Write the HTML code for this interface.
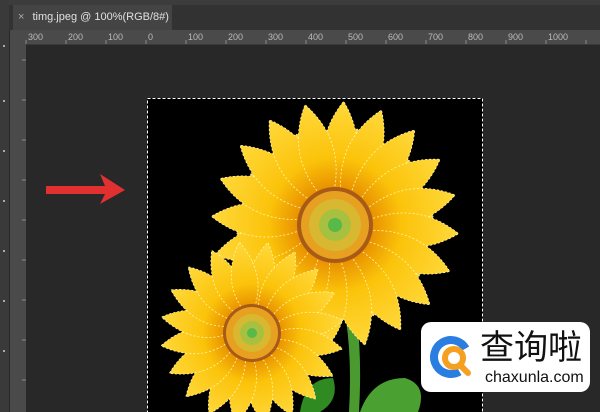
<!DOCTYPE html>
<html><head><meta charset="utf-8"><style>
body{margin:0;width:600px;height:412px;overflow:hidden;background:#282828;font-family:"Liberation Sans",sans-serif;position:relative}
.abs{position:absolute}
</style></head><body>
<div class="abs" style="left:0;top:0;width:600px;height:5px;background:#3c3c3c"></div>
<div class="abs" style="left:0;top:5px;width:600px;height:25px;background:#323232"></div>
<div class="abs" style="left:13px;top:5px;width:159px;height:25px;background:#444;color:#e0e0e0;font-size:11px;line-height:25px;white-space:nowrap;overflow:hidden">
<span style="margin-left:5px;color:#aaa">×</span><span style="margin-left:8px">timg.jpeg @ 100%(RGB/8#) <span style="color:#999">*</span></span></div>
<div class="abs" style="left:0;top:0;width:9px;height:412px;background:#3a3a3a"></div>
<div class="abs" style="left:10px;top:30px;width:590px;height:14px;background:#4a4a4a;border-bottom:1px solid #3a3a3a"></div>
<div class="abs" style="left:10px;top:30px;width:16px;height:382px;background:#4a4a4a"></div>
<div class="abs" style="top:30px;left:0;width:600px;height:14px;font-size:9px;color:#bbb;line-height:14px">
<span class="abs" style="left:28px">300</span><span class="abs" style="left:68px">200</span><span class="abs" style="left:108px">100</span><span class="abs" style="left:148px">0</span><span class="abs" style="left:188px">100</span><span class="abs" style="left:228px">200</span><span class="abs" style="left:268px">300</span><span class="abs" style="left:308px">400</span><span class="abs" style="left:348px">500</span><span class="abs" style="left:388px">600</span><span class="abs" style="left:428px">700</span><span class="abs" style="left:468px">800</span><span class="abs" style="left:508px">900</span><span class="abs" style="left:548px">1000</span></div>
<svg class="abs" style="left:0;top:0" width="600" height="412">
<g stroke="#888" stroke-width="1">
<path d="M26 40V44M66 40V44M106 40V44M146 40V44M186 40V44M226 40V44M266 40V44M306 40V44M346 40V44M386 40V44M426 40V44M466 40V44M506 40V44M546 40V44M586 40V44"/>
<path d="M22 60H26M22 100H26M22 140H26M22 180H26M22 220H26M22 260H26M22 300H26M22 340H26M22 380H26"/>
</g>
<g fill="#aaa"><rect x="3" y="45" width="2" height="2"/><rect x="3" y="100" width="2" height="2"/><rect x="3" y="150" width="2" height="2"/><rect x="3" y="200" width="2" height="2"/><rect x="3" y="250" width="2" height="2"/><rect x="3" y="300" width="2" height="2"/><rect x="3" y="350" width="2" height="2"/></g>
<polygon points="46,186 105,186 100,174 125,190 100,204 105,194 46,194" fill="#e03030"/>
<rect x="147" y="98" width="336" height="320" fill="#000"/>
<rect x="147.5" y="98.5" width="335" height="330" fill="none" stroke="#fff" stroke-dasharray="3 2"/>
<defs>
<radialGradient id="gb" cx="0" cy="0" r="122" gradientUnits="userSpaceOnUse"><stop offset="0.3" stop-color="#e89000"/><stop offset="0.55" stop-color="#fbc30a"/><stop offset="1" stop-color="#ffd83a"/></radialGradient>
<radialGradient id="gs" cx="0" cy="0" r="90" gradientUnits="userSpaceOnUse"><stop offset="0.3" stop-color="#e89000"/><stop offset="0.55" stop-color="#fbc30a"/><stop offset="1" stop-color="#ffd83a"/></radialGradient>
<path id="p" d="M0 -20 Q34 -75 0 -124 Q-34 -75 0 -20Z" fill="url(#gb)" stroke="#fff6b0" stroke-width="0.8" stroke-dasharray="2 2"/>
<path id="q" d="M0 -15 Q26 -52 0 -92 Q-26 -52 0 -15Z" fill="url(#gs)" stroke="#fff6b0" stroke-width="0.8" stroke-dasharray="2 2"/>
</defs>
<path d="M346 320 Q352 360 349 412 L359 412 Q362 360 357 320Z" fill="#4a9a30"/>
<path d="M300 412 Q305 378 333 378 Q340 400 320 412Z" fill="#2f8a22"/>
<path d="M360 412 Q372 378 405 378 Q428 385 418 412Z" fill="#4aa030"/>
<g transform="translate(335 225)">
<g transform="scale(0.8)"><use href="#p" transform="rotate(13)"/><use href="#p" transform="rotate(49)"/><use href="#p" transform="rotate(85)"/><use href="#p" transform="rotate(121)"/><use href="#p" transform="rotate(157)"/><use href="#p" transform="rotate(193)"/><use href="#p" transform="rotate(229)"/><use href="#p" transform="rotate(265)"/><use href="#p" transform="rotate(301)"/><use href="#p" transform="rotate(337)"/></g>
<use href="#p" transform="rotate(4)"/><use href="#p" transform="rotate(22)"/><use href="#p" transform="rotate(40)"/><use href="#p" transform="rotate(58)"/><use href="#p" transform="rotate(76)"/><use href="#p" transform="rotate(94)"/><use href="#p" transform="rotate(112)"/><use href="#p" transform="rotate(130)"/><use href="#p" transform="rotate(148)"/><use href="#p" transform="rotate(166)"/><use href="#p" transform="rotate(184)"/><use href="#p" transform="rotate(202)"/><use href="#p" transform="rotate(220)"/><use href="#p" transform="rotate(238)"/><use href="#p" transform="rotate(256)"/><use href="#p" transform="rotate(274)"/><use href="#p" transform="rotate(292)"/><use href="#p" transform="rotate(310)"/><use href="#p" transform="rotate(328)"/><use href="#p" transform="rotate(346)"/>
<circle r="38" fill="#a85a18"/><circle r="34" fill="#e8a020"/><circle r="26" fill="#d8b830"/><circle r="16" fill="#a8c040"/><circle r="7" fill="#58b848"/>
</g>
<g transform="translate(252 333)">
<use href="#q" transform="rotate(10)"/><use href="#q" transform="rotate(28)"/><use href="#q" transform="rotate(46)"/><use href="#q" transform="rotate(64)"/><use href="#q" transform="rotate(82)"/><use href="#q" transform="rotate(100)"/><use href="#q" transform="rotate(118)"/><use href="#q" transform="rotate(136)"/><use href="#q" transform="rotate(154)"/><use href="#q" transform="rotate(172)"/><use href="#q" transform="rotate(190)"/><use href="#q" transform="rotate(208)"/><use href="#q" transform="rotate(226)"/><use href="#q" transform="rotate(244)"/><use href="#q" transform="rotate(262)"/><use href="#q" transform="rotate(280)"/><use href="#q" transform="rotate(298)"/><use href="#q" transform="rotate(316)"/><use href="#q" transform="rotate(334)"/><use href="#q" transform="rotate(352)"/>
<circle r="29" fill="#a85a18"/><circle r="26" fill="#e8a020"/><circle r="19" fill="#d8b830"/><circle r="12" fill="#a8c040"/><circle r="5" fill="#58b848"/>
</g>
<rect x="421" y="322" width="169" height="70" rx="10" fill="#fff"/>
<circle cx="451" cy="357" r="17" fill="none" stroke="#2a7de1" stroke-width="8" stroke-dasharray="80 30" transform="rotate(60 451 357)"/>
<circle cx="454" cy="358" r="9" fill="none" stroke="#f5a020" stroke-width="6"/>
<line x1="460" y1="365" x2="468" y2="373" stroke="#f5a020" stroke-width="6" stroke-linecap="round"/>
</svg>
<div class="abs" style="left:480px;top:328px;font-size:34px;line-height:40px;color:#111;font-family:'Liberation Sans','Noto Sans CJK SC',sans-serif">查询啦</div>
<div class="abs" style="left:485px;top:369px;font-size:16px;color:#111">chaxunla.com</div>
</body></html>
